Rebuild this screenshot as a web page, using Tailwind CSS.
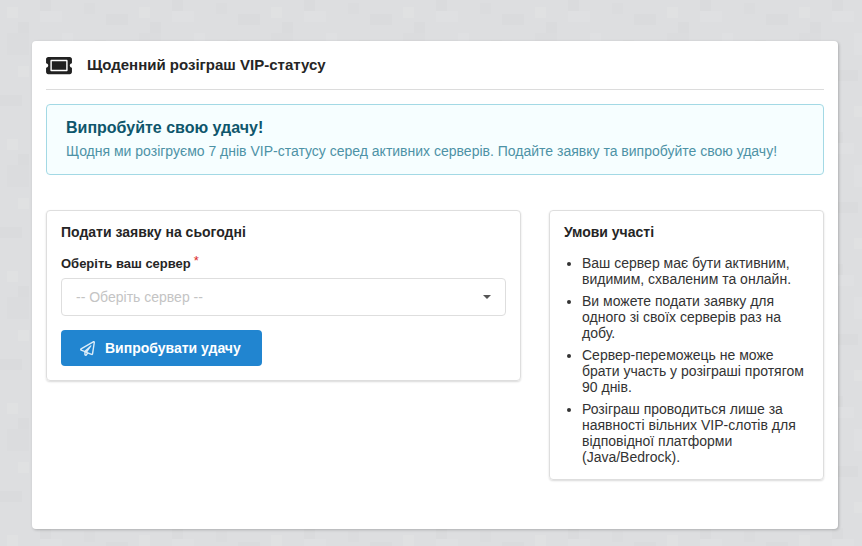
<!DOCTYPE html>
<html lang="uk">
<head>
    <meta charset="UTF-8">
    <title>Щоденний розіграш VIP-статусу</title>
    <script src="https://cdn.jsdelivr.net/npm/@tailwindcss/browser@4"></script>
</head>
<body class="relative h-[546px] overflow-hidden bg-[#dddee0] font-['Liberation_Sans',Arial,sans-serif] text-[14px] leading-[16px] text-[#252525]">
    <!-- pixel texture of the page background -->
    <svg class="absolute inset-0 w-full h-full" xmlns="http://www.w3.org/2000/svg">
        <defs>
            <pattern id="tiles" width="132" height="132" patternUnits="userSpaceOnUse">
                <rect x="7" y="7" width="11" height="11" fill="#e0e1e2"/>
                <rect x="40" y="0" width="11" height="11" fill="#dadbdd"/>
                <rect x="40" y="11" width="22" height="11" fill="#dfe0e2"/>
                <rect x="84" y="3" width="11" height="11" fill="#dbdcde"/>
                <rect x="106" y="14" width="22" height="11" fill="#dadbdd"/>
                <rect x="18" y="22" width="11" height="11" fill="#dadbdd"/>
                <rect x="7" y="33" width="22" height="22" fill="#dbdcde"/>
                <rect x="62" y="33" width="11" height="22" fill="#dfe0e2"/>
                <rect x="95" y="40" width="11" height="11" fill="#dadbdd"/>
                <rect x="117" y="44" width="11" height="22" fill="#e0e1e3"/>
                <rect x="18" y="66" width="11" height="11" fill="#e0e1e2"/>
                <rect x="44" y="70" width="22" height="11" fill="#dadbdd"/>
                <rect x="84" y="70" width="11" height="22" fill="#dbdcde"/>
                <rect x="0" y="95" width="22" height="11" fill="#dadbdd"/>
                <rect x="33" y="103" width="11" height="22" fill="#dfe0e2"/>
                <rect x="62" y="106" width="22" height="11" fill="#e0e1e2"/>
                <rect x="106" y="95" width="11" height="11" fill="#dadbdd"/>
                <rect x="95" y="117" width="22" height="11" fill="#dfe0e2"/>
            </pattern>
        </defs>
        <rect width="100%" height="100%" fill="url(#tiles)"/>
    </svg>

    <div class="relative mt-[41px] ml-[32px] w-[806px] h-[488px] bg-white rounded-[4px] shadow-[1px_1px_3px_rgba(0,0,0,0.22)] pl-[14px] pr-[14px]">
        <!-- header -->
        <div class="flex items-center h-[49px] border-b border-[#dcdcdc]">
            <svg class="w-[26px] h-[23px] mt-[1px] fill-[#212121]" viewBox="0 0 576 512"><path d="M128 160h320v192H128V160zm400 96c0 26.51 21.49 48 48 48v96c0 26.51-21.49 48-48 48H48c-26.51 0-48-21.49-48-48v-96c26.51 0 48-21.49 48-48s-21.49-48-48-48v-96c0-26.51 21.49-48 48-48h480c26.51 0 48 21.49 48 48v96c-26.51 0-48 21.49-48 48zm-48-104c0-13.255-10.745-24-24-24H120c-13.255 0-24 10.745-24 24v208c0 13.255 10.745 24 24 24h336c13.255 0 24-10.745 24-24V152z"/></svg>
            <h1 class="ml-[15px] text-[15px] font-bold">Щоденний розіграш VIP-статусу</h1>
        </div>

        <!-- message -->
        <div class="mt-[14px] h-[71px] rounded-[4px] border border-[#a3d9e5] bg-[#f6feff] pl-[19px] pt-[14px]">
            <div class="text-[16px] leading-[18px] font-bold text-[#0e566c]">Випробуйте свою удачу!</div>
            <p class="mt-[4px] text-[14px] leading-[20px] text-[#4d92a6]">Щодня ми розігруємо 7 днів VIP-статусу серед активних серверів. Подайте заявку та випробуйте свою удачу!</p>
        </div>

        <div class="flex items-start justify-between mt-[35px]">
            <!-- form -->
            <div class="w-[475px] h-[171px] rounded-[4px] border border-[#dedede] shadow-[0_1px_2px_rgba(0,0,0,0.15)] px-[14px] pt-[13px]">
                <h2 class="font-bold text-[14px] leading-[16px]">Подати заявку на сьогодні</h2>
                <label class="block mt-[16px] text-[13px] leading-[15px] font-bold">Оберіть ваш сервер<span class="relative -top-[3px] ml-[3px] font-normal text-[#db2828]">*</span></label>
                <div class="flex items-center justify-between mt-[7px] h-[38px] rounded-[4px] border border-[#dedede] pl-[14px] pr-[14px]">
                    <span class="text-[14px] text-[#c4c4c4]">-- Оберіть сервер --</span>
                    <span class="w-0 h-0 border-x-[4px] border-x-transparent border-t-[4px] border-t-[#555]"></span>
                </div>
                <button class="flex items-center mt-[14px] w-[201px] h-[36px] rounded-[4px] bg-[#2185d0] pl-[19px] text-white font-bold text-[14px]">
                    <svg class="w-[15px] h-[15px] fill-[#dcecf8]" viewBox="0 0 512 512"><path d="M440 6.5L24 246.4c-34.4 19.9-31.1 70.8 5.7 85.9L144 379.6V464c0 46.4 59.2 65.5 86.6 28.6l43.8-59.1 111.9 46.2c5.9 2.4 12.1 3.6 18.3 3.6 8.2 0 16.3-2.1 23.6-6.2 12.8-7.2 21.6-20 23.9-34.5l59.4-387.2c6.1-40.1-36.9-68.8-71.5-48.9zM192 464v-64.6l36.6 15.1L192 464zm212.6-28.7l-153.8-63.5L391 169.5c10.7-15.5-9.5-33.5-23.7-21.2L155.8 332.6 48 288 464 48l-59.4 387.3z"/></svg>
                    <span class="ml-[10px]">Випробувати удачу</span>
                </button>
            </div>

            <!-- rules -->
            <div class="w-[275px] h-[270px] rounded-[4px] border border-[#dedede] shadow-[0_1px_2px_rgba(0,0,0,0.15)] pl-[14px] pr-[10px] pt-[13px]">
                <h2 class="font-bold text-[14px] leading-[16px]">Умови участі</h2>
                <ul class="mt-[15px] list-disc pl-[18px] text-[14px] leading-[16px] text-[#333] space-y-[6px]">
                    <li>Ваш сервер має бути активним, видимим, схваленим та онлайн.</li>
                    <li>Ви можете подати заявку для одного зі своїх серверів раз на добу.</li>
                    <li>Сервер-переможець не може брати участь у розіграші протягом 90 днів.</li>
                    <li>Розіграш проводиться лише за наявності вільних VIP-слотів для відповідної платформи (Java/Bedrock).</li>
                </ul>
            </div>
        </div>
    </div>
</body>
</html>
